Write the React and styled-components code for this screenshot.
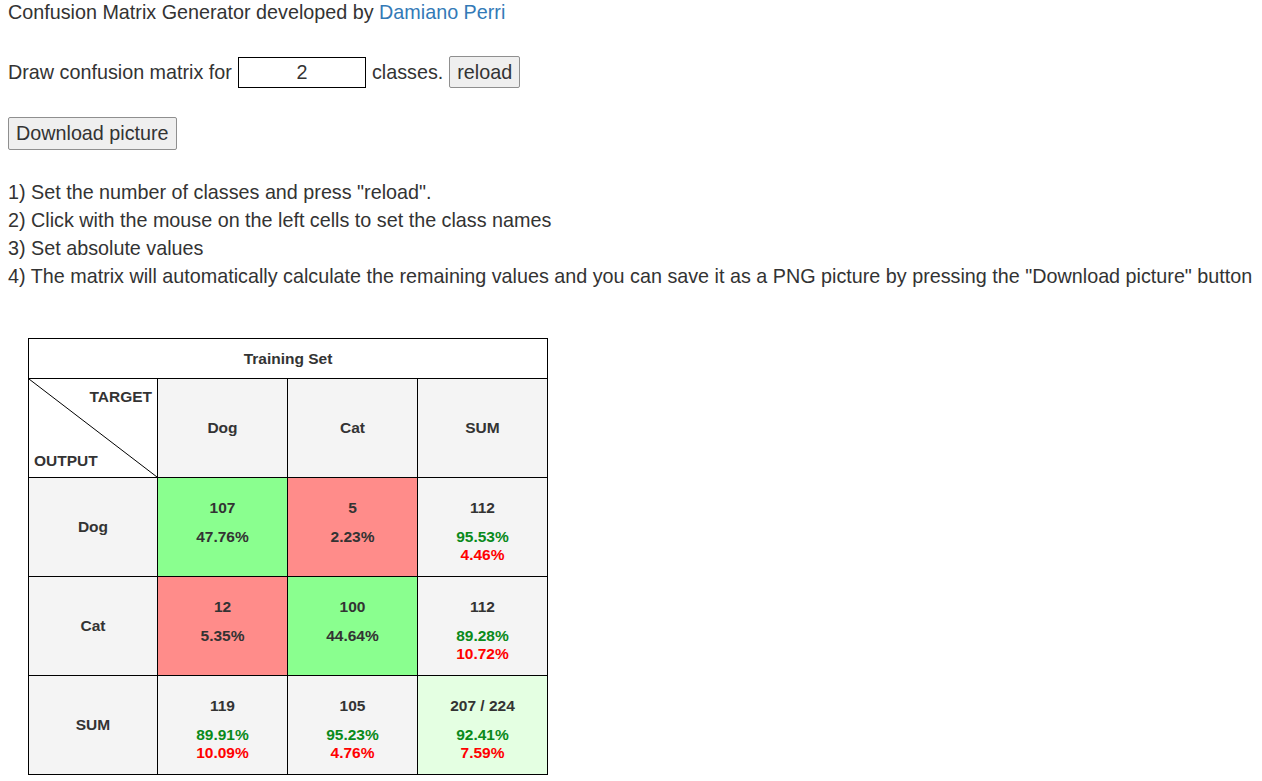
import React from 'react'
import styled, { createGlobalStyle } from 'styled-components'

const GlobalStyle = createGlobalStyle`
  body {
    margin: 0;
    background: #fff;
    color: #333;
    font-family: "Liberation Sans", Arial, sans-serif;
  }
`

const Page = styled.div`
  padding: 0 8px;
  font-size: 19.75px;
`

const Title = styled.div`
  line-height: 24px;
  height: 24px;
  a {
    color: #337ab7;
    text-decoration: none;
  }
`

const Controls = styled.div`
  display: flex;
  align-items: center;
  gap: 6px;
  margin-top: 32px;
  height: 32px;
`

const NumberInput = styled.input`
  box-sizing: border-box;
  width: 128px;
  height: 31px;
  border: 1px solid #000;
  font: inherit;
  color: #333;
  text-align: center;
  padding: 0;
  outline: none;
`

const Button = styled.button`
  box-sizing: border-box;
  height: ${p => p.$h || 32}px;
  padding: 0 7px;
  font: inherit;
  color: #333;
  background: #efefef;
  border: 1px solid #8f8f8f;
  border-radius: 2px;
`

const DownloadRow = styled.div`
  margin-top: 29px;
  display: flex;
`

const Steps = styled.div`
  margin-top: 28px;
  line-height: 28px;
  white-space: nowrap;
`

const Matrix = styled.table`
  margin: 48px 0 0 20px;
  border-collapse: collapse;
  table-layout: fixed;
  font-size: 15.5px;
  font-weight: bold;
  color: #333;
`

const Col = styled.col`
  width: ${p => p.$w}px;
`

const TitleCell = styled.td`
  border: 1px solid #000;
  height: 39px;
  text-align: center;
  background: #fff;
  padding: 0;
`

const Cell = styled.td`
  border: 1px solid #000;
  height: 98px;
  padding: 0;
  text-align: center;
  vertical-align: ${p => (p.$top ? 'top' : 'middle')};
  background: ${p => p.$bg || '#f4f4f4'};
`

const Corner = styled.td`
  border: 1px solid #000;
  height: 98px;
  padding: 0;
  background: #fff;
`

const CornerInner = styled.div`
  height: 98px;
  display: flex;
  flex-direction: column;
  justify-content: space-between;
  padding: 9px 5px 7px 5px;
  box-sizing: border-box;
  position: relative;
`

const Diagonal = styled.svg`
  position: absolute;
  left: 0;
  top: 0;
  width: 100%;
  height: 100%;
`

const CornerLabel = styled.span`
  position: relative;
  text-align: ${p => p.$align};
  line-height: 18px;
`

const Num = styled.div`
  line-height: 18px;
  padding-top: 21px;
`

const Pct = styled.div`
  line-height: 18px;
  margin-top: ${p => (p.$first ? 11 : 0)}px;
  color: ${p => p.$color || '#333'};
`

const GREEN = '#8aff8f'
const RED = '#ff8c8a'
const LIGHT = '#e4ffe2'
const OK = '#0a8a1a'
const BAD = '#ff0000'

const ValueCell = ({ bg, n, pct, good, bad }) => (
  <Cell $top $bg={bg}>
    <Num>{n}</Num>
    {pct && <Pct $first>{pct}</Pct>}
    {good && <Pct $first $color={OK}>{good}</Pct>}
    {bad && <Pct $color={BAD}>{bad}</Pct>}
  </Cell>
)

export default function App () {
  return (
    <Page>
      <GlobalStyle />
      <Title>
        Confusion Matrix Generator developed by <a href='#'>Damiano Perri</a>
      </Title>
      <Controls>
        <span>Draw confusion matrix for</span>
        <NumberInput defaultValue='2' />
        <span>classes.</span>
        <Button>reload</Button>
      </Controls>
      <DownloadRow>
        <Button $h={33}>Download picture</Button>
      </DownloadRow>
      <Steps>
        <div>1) Set the number of classes and press "reload".</div>
        <div>2) Click with the mouse on the left cells to set the class names</div>
        <div>3) Set absolute values</div>
        <div>4) The matrix will automatically calculate the remaining values and you can save it as a PNG picture by pressing the "Download picture" button</div>
      </Steps>
      <Matrix>
        <colgroup>
          <Col $w={129} />
          <Col $w={130} />
          <Col $w={130} />
          <Col $w={130} />
        </colgroup>
        <tbody>
          <tr>
            <TitleCell colSpan={4}>Training Set</TitleCell>
          </tr>
          <tr>
            <Corner>
              <CornerInner>
                <Diagonal viewBox='0 0 100 100' preserveAspectRatio='none'>
                  <line x1='0' y1='0' x2='100' y2='100' stroke='#000' strokeWidth='1' vectorEffect='non-scaling-stroke' />
                </Diagonal>
                <CornerLabel $align='right'>TARGET</CornerLabel>
                <CornerLabel $align='left'>OUTPUT</CornerLabel>
              </CornerInner>
            </Corner>
            <Cell>Dog</Cell>
            <Cell>Cat</Cell>
            <Cell>SUM</Cell>
          </tr>
          <tr>
            <Cell>Dog</Cell>
            <ValueCell bg={GREEN} n='107' pct='47.76%' />
            <ValueCell bg={RED} n='5' pct='2.23%' />
            <ValueCell n='112' good='95.53%' bad='4.46%' />
          </tr>
          <tr>
            <Cell>Cat</Cell>
            <ValueCell bg={RED} n='12' pct='5.35%' />
            <ValueCell bg={GREEN} n='100' pct='44.64%' />
            <ValueCell n='112' good='89.28%' bad='10.72%' />
          </tr>
          <tr>
            <Cell>SUM</Cell>
            <ValueCell n='119' good='89.91%' bad='10.09%' />
            <ValueCell n='105' good='95.23%' bad='4.76%' />
            <ValueCell bg={LIGHT} n='207 / 224' good='92.41%' bad='7.59%' />
          </tr>
        </tbody>
      </Matrix>
    </Page>
  )
}
